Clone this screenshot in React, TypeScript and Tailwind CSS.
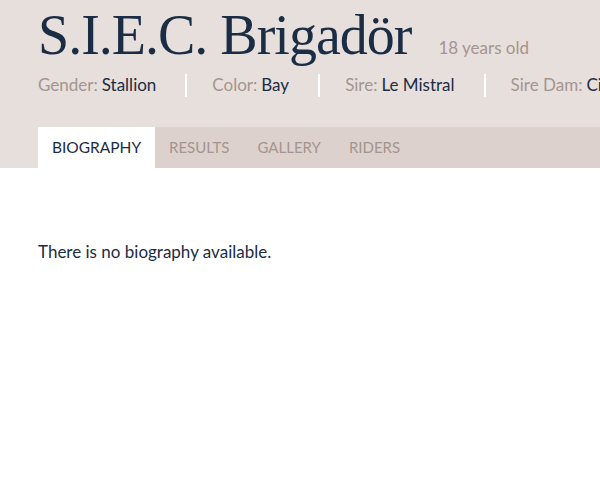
export default function App() {
  const meta = [
    { label: "Gender:", value: "Stallion" },
    { label: "Color:", value: "Bay" },
    { label: "Sire:", value: "Le Mistral" },
    { label: "Sire Dam:", value: "Cinderella" },
  ];
  const tabs = ["RESULTS", "GALLERY", "RIDERS"];
  return (
    <div className="w-[600px] h-[479px] overflow-hidden bg-white" style={{ fontFamily: "Lato, 'Open Sans', sans-serif" }}>
      <div className="bg-[#e7dfdc] pt-[4px]">
        <div className="pl-[38px] flex items-baseline whitespace-nowrap">
          <h1 className="text-[56px] leading-[62px] text-[#1b2d44] tracking-[-1px]" style={{ fontFamily: "'Liberation Serif', serif" }}>
            S.I.E.C. Brigadör
          </h1>
          <span className="ml-[27px] text-[17px] text-[#a5958e]">18 years old</span>
        </div>
        <div className="pl-[38px] mt-[7px] flex items-center whitespace-nowrap h-[24px] text-[17px]">
          {meta.map((m, i) => (
            <div key={m.label} className="flex items-center">
              {i > 0 && <div className="w-[2px] h-[23px] bg-white ml-[29px] mr-[25px]" />}
              <span className="text-[#a5958e]">{m.label}</span>
              <span className="ml-[4px] text-[#1b2d44]">{m.value}</span>
            </div>
          ))}
        </div>
        <div className="pl-[38px] mt-[30px] flex">
          <div className="flex-1 flex bg-[#dcd1cd] h-[41px]">
            <div className="bg-white w-[117px] flex items-center justify-center text-[15.5px] text-[#1b2d44]">BIOGRAPHY</div>
            {tabs.map((t) => (
              <div key={t} className="px-[14px] flex items-center text-[15px] text-[#a5958e]">{t}</div>
            ))}
          </div>
        </div>
      </div>
      <div className="pl-[38px] pt-[71px] text-[17px] text-[#1b2d44]">There is no biography available.</div>
    </div>
  );
}
